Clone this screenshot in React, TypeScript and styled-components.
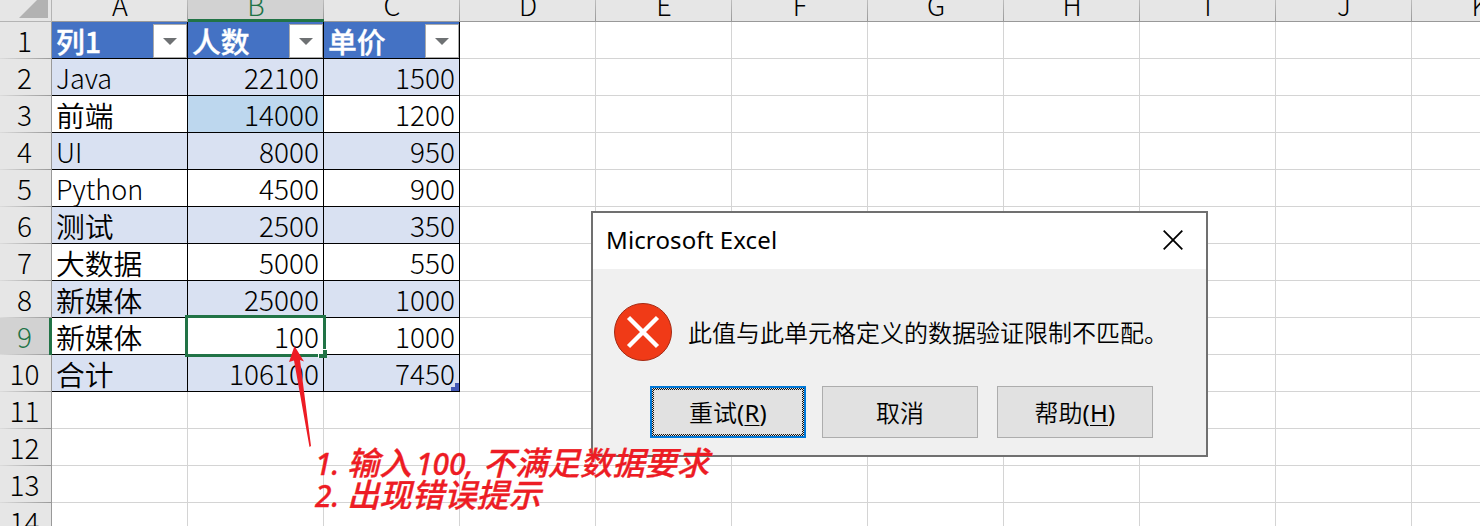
import React from 'react';
import styled, { createGlobalStyle, css } from 'styled-components';

const GlobalStyle = createGlobalStyle`
  *, *::before, *::after { box-sizing: border-box; }
  body { margin: 0; background: #fff; overflow: hidden; }
`;

const sheetFont = `"Noto Sans CJK SC", sans-serif`;
const uiFont = `"Noto Sans", "Noto Sans CJK SC", sans-serif`;

const Window = styled.div`
  position: relative;
  width: 1480px;
  height: 526px;
  overflow: hidden;
  font-family: ${sheetFont};
  font-weight: 300;
  font-size: 27px;
  color: #000;
`;

const Sheet = styled.div`
  display: flex;
  flex-direction: column;
  width: 1548px;
`;

const HeaderRow = styled.div`
  display: flex;
  height: 22px;
  background: #e6e6e6;
`;

const Corner = styled.div`
  width: 52px;
  height: 22px;
  display: flex;
  justify-content: flex-end;
  border-bottom: 1px solid #b4b4b4;
  border-right: 1px solid #b4b4b4;
  padding-right: 3px;
`;

const ColumnHeader = styled.div<{ $active?: boolean }>`
  width: 136px;
  height: 22px;
  display: flex;
  justify-content: center;
  align-items: flex-end;
  line-height: 40px;
  color: ${p => (p.$active ? '#217346' : '#000')};
  background: linear-gradient(#bdbdbd, #999) right / 1px 100% no-repeat,
    ${p => (p.$active ? '#d2d2d2' : '#e6e6e6')};
  border-bottom: ${p => (p.$active ? '3px solid #217346' : '1px solid #999')};
  & > span { margin-bottom: ${p => (p.$active ? '-6px' : '-4px')}; }
`;

const Row = styled.div`
  display: flex;
  height: 37px;
`;

const RowHeader = styled.div<{ $active?: boolean }>`
  width: 52px;
  height: 37px;
  display: flex;
  justify-content: center;
  line-height: 37px;
  color: ${p => (p.$active ? '#217346' : '#000')};
  background: linear-gradient(90deg, #dcdcdc, #999) bottom / 100% 1px no-repeat,
    ${p => (p.$active ? '#d2d2d2' : '#e6e6e6')};
  border-right: ${p => (p.$active ? '3px solid #217346' : '1px solid #999')};
  padding-right: ${p => (p.$active ? '0' : '2px')};
`;

type CellProps = { $fill?: string; $table?: boolean; $head?: boolean; $number?: boolean };

const Cell = styled.div<CellProps>`
  width: 136px;
  height: 37px;
  display: flex;
  justify-content: ${p => (p.$number ? 'flex-end' : 'flex-start')};
  line-height: ${p => (p.$number ? '37px' : '38px')};
  padding: 0 ${p => (p.$number ? '4px' : '0')} 0 4px;
  background: ${p => p.$fill || '#fff'};
  border-right: 1px solid ${p => (p.$table ? '#000' : '#d4d4d4')};
  border-bottom: 1px solid ${p => (p.$table ? '#000' : '#d4d4d4')};
  ${p => p.$head && css`
    color: #fff;
    -webkit-text-stroke: 0.35px #fff;
    justify-content: space-between;
  `}
`;

type LabelKind = 'cjk' | 'digits' | 'latin';
const labelSize: Record<LabelKind, string> = { cjk: '28.8px', digits: '28px', latin: '27px' };

const Label = styled.span<{ $kind: LabelKind; $strong?: boolean }>`
  white-space: nowrap;
  font-size: ${p => labelSize[p.$kind]};
  font-weight: ${p => (p.$strong ? 500 : p.$kind === 'cjk' ? 350 : 300)};
`;

const FilterButton = styled.div`
  width: 34px;
  height: 34px;
  margin-top: 2px;
  display: flex;
  align-items: center;
  justify-content: center;
  background: #fff;
  border: 1px solid #ababab;
`;

const Selection = styled.div`
  position: absolute;
  left: 185px;
  top: 315px;
  width: 141px;
  height: 42px;
  border: 3px solid #217346;
`;

const FillHandle = styled.svg`
  position: absolute;
  left: 318px;
  top: 349px;
`;

const TableCorner = styled.svg`
  position: absolute;
  left: 451px;
  top: 383px;
`;

const Dialog = styled.div`
  position: absolute;
  left: 591px;
  top: 211px;
  width: 617px;
  height: 246px;
  border: 2px solid #707070;
  background: #f0f0f0;
  font-family: ${uiFont};
  font-weight: 350;
  font-size: 24px;
  display: flex;
  flex-direction: column;
`;

const TitleBar = styled.div`
  height: 56px;
  flex: none;
  background: #fff;
  display: flex;
  justify-content: space-between;
  align-items: center;
  padding: 0 23px 0 13px;
`;

const Title = styled.span`
  font-weight: 400;
  letter-spacing: 0.12px;
  padding-bottom: 3px;
`;

const CloseIcon = styled.svg`
  margin-bottom: 2px;
`;

const Message = styled.div`
  height: 60px;
  margin: 33px 0 0 20px;
  display: flex;
  align-items: center;
  gap: 15px;
  white-space: nowrap;
`;

const MessageText = styled.span`
  padding-bottom: 2px;
`;

const Buttons = styled.div`
  display: flex;
  margin: 24px 0 0 57px;
`;

const DialogButton = styled.div<{ $focus?: boolean; $gap?: number }>`
  width: 156px;
  height: 52px;
  margin-right: ${p => p.$gap || 0}px;
  display: flex;
  align-items: center;
  justify-content: center;
  background: #e1e1e1;
  border: ${p => (p.$focus ? '2px solid #0078d7' : '1px solid #adadad')};
`;

const ButtonText = styled.span`
  padding-bottom: 2px;
`;

const Shortcut = styled.span`
  font-weight: 400;
  letter-spacing: 0.2px;
`;

const FocusFrame = styled.div`
  align-self: stretch;
  flex: 1;
  display: flex;
  padding: 2px;
  background: repeating-conic-gradient(#111 0 25%, #e1e1e1 0 50%) 0 0 / 2px 2px;
`;

const FocusFill = styled.div`
  flex: 1;
  display: flex;
  align-items: center;
  justify-content: center;
  background: #e1e1e1;
`;

const Key = styled.span`
  text-decoration: underline;
  text-decoration-thickness: 1px;
  text-underline-offset: 3px;
`;

const Arrow = styled.svg`
  position: absolute;
  left: 284px;
  top: 344px;
`;

const Notes = styled.div`
  position: absolute;
  left: 315px;
  top: 446px;
  color: #ed1c24;
  font-family: ${uiFont};
  font-style: italic;
  font-weight: 500;
  font-size: 32.3px;
  -webkit-text-stroke: 0.3px #ed1c24;
`;

const Note = styled.div`
  height: 32px;
  line-height: 32px;
  display: flex;
  align-items: baseline;
  white-space: pre;
`;

const NotePart = styled.span<{ $w?: number; $latin?: boolean }>`
  flex: none;
  ${p => p.$w && css`width: ${p.$w}px;`}
  ${p => p.$latin && css`font-size: 30px;`}
`;

const columns = ['A', 'B', 'C', 'D', 'E', 'F', 'G', 'H', 'I', 'J', 'K'];
const tableHead = ['列1', '人数', '单价'];
const data: string[][] = [
  ['Java', '22100', '1500'],
  ['前端', '14000', '1200'],
  ['UI', '8000', '950'],
  ['Python', '4500', '900'],
  ['测试', '2500', '350'],
  ['大数据', '5000', '550'],
  ['新媒体', '25000', '1000'],
  ['新媒体', '100', '1000'],
  ['合计', '106100', '7450'],
];

function kindOf(text: string): LabelKind {
  if (/[\u4e00-\u9fff]/.test(text)) return 'cjk';
  return /^\d+$/.test(text) ? 'digits' : 'latin';
}

function fillFor(row: number, col: number) {
  if (row === 1 && col === 1) return '#bdd7ee';
  return row % 2 === 0 ? '#d9e1f2' : '#fff';
}

function SheetRow({ index }: { index: number }) {
  const values = index > 0 ? data[index - 1] : undefined;
  return (
    <Row>
      <RowHeader $active={index === 8}><Label $kind="digits">{index + 1}</Label></RowHeader>
      {columns.map((c, col) => {
        if (col < 3 && index === 0) {
          return (
            <Cell key={c} $table $head $fill="#4472c4">
              <Label $kind="cjk" $strong>{tableHead[col]}</Label>
              <FilterButton>
                <svg width="14" height="7" viewBox="0 0 14 7"><path d="M0 0H14L7 7Z" fill="#6e7173" /></svg>
              </FilterButton>
            </Cell>
          );
        }
        if (col < 3 && values) {
          return (
            <Cell key={c} $table $number={col > 0} $fill={fillFor(index - 1, col)}>
              <Label $kind={kindOf(values[col])}>{values[col]}</Label>
            </Cell>
          );
        }
        return <Cell key={c} />;
      })}
    </Row>
  );
}

export default function App() {
  return (
    <Window>
      <GlobalStyle />
      <Sheet>
        <HeaderRow>
          <Corner>
            <svg width="29" height="18" viewBox="0 0 29 18"><path d="M29 -11V18H0Z" fill="#b2b2b2" /></svg>
          </Corner>
          {columns.map(c => (
            <ColumnHeader key={c} $active={c === 'B'}><Label $kind="latin">{c}</Label></ColumnHeader>
          ))}
        </HeaderRow>
        {Array.from({ length: 14 }, (_, i) => <SheetRow key={i} index={i} />)}
      </Sheet>

      <Selection />
      <FillHandle width="9" height="9" viewBox="0 0 9 9">
        <path d="M0 5H1V9H0ZM5 0H9V1H5Z" fill="#fff" />
        <path d="M5 1H9V9H1V5H5Z" fill="#217346" />
      </FillHandle>
      <TableCorner width="8" height="8" viewBox="0 0 8 8">
        <path d="M4 0H8V8H0V4H4Z" fill="#4459b5" />
      </TableCorner>

      <Dialog>
        <TitleBar>
          <Title>Microsoft Excel</Title>
          <CloseIcon width="20" height="20" viewBox="0 0 20 20"><path d="M0.7 0.7L19.3 19.3M19.3 0.7L0.7 19.3" stroke="#000" strokeWidth="1.8" /></CloseIcon>
        </TitleBar>
        <Message>
          <svg width="60" height="60" viewBox="0 0 60 60">
            <circle cx="30" cy="30" r="28.5" fill="#f03a17" stroke="#a52a14" strokeWidth="1" />
            <path d="M15.5 15.5L44.5 44.5M44.5 15.5L15.5 44.5" stroke="#fff" strokeWidth="4.4" />
          </svg>
          <MessageText>此值与此单元格定义的数据验证限制不匹配。</MessageText>
        </Message>
        <Buttons>
          <DialogButton $focus $gap={16}>
            <FocusFrame>
              <FocusFill><ButtonText>重试<Shortcut>(<Key>R</Key>)</Shortcut></ButtonText></FocusFill>
            </FocusFrame>
          </DialogButton>
          <DialogButton $gap={19}><ButtonText>取消</ButtonText></DialogButton>
          <DialogButton><ButtonText>帮助<Shortcut>(<Key>H</Key>)</Shortcut></ButtonText></DialogButton>
        </Buttons>
      </Dialog>

      <Arrow width="30" height="106" viewBox="0 0 30 106">
        <path d="M10.5 2L20 17.5L16 16L27 102L25.5 103L10 16.5L5 18Z" fill="#ed1c24" />
      </Arrow>
      <Notes>
        <Note>
          <NotePart $w={32} $latin>1.</NotePart>
          <NotePart $w={69} >输入</NotePart>
          <NotePart $w={67} $latin>100,</NotePart>
          <NotePart>不满足数据要求</NotePart>
        </Note>
        <Note>
          <NotePart $w={32} $latin>2.</NotePart>
          <NotePart>出现错误提示</NotePart>
        </Note>
      </Notes>
    </Window>
  );
}
